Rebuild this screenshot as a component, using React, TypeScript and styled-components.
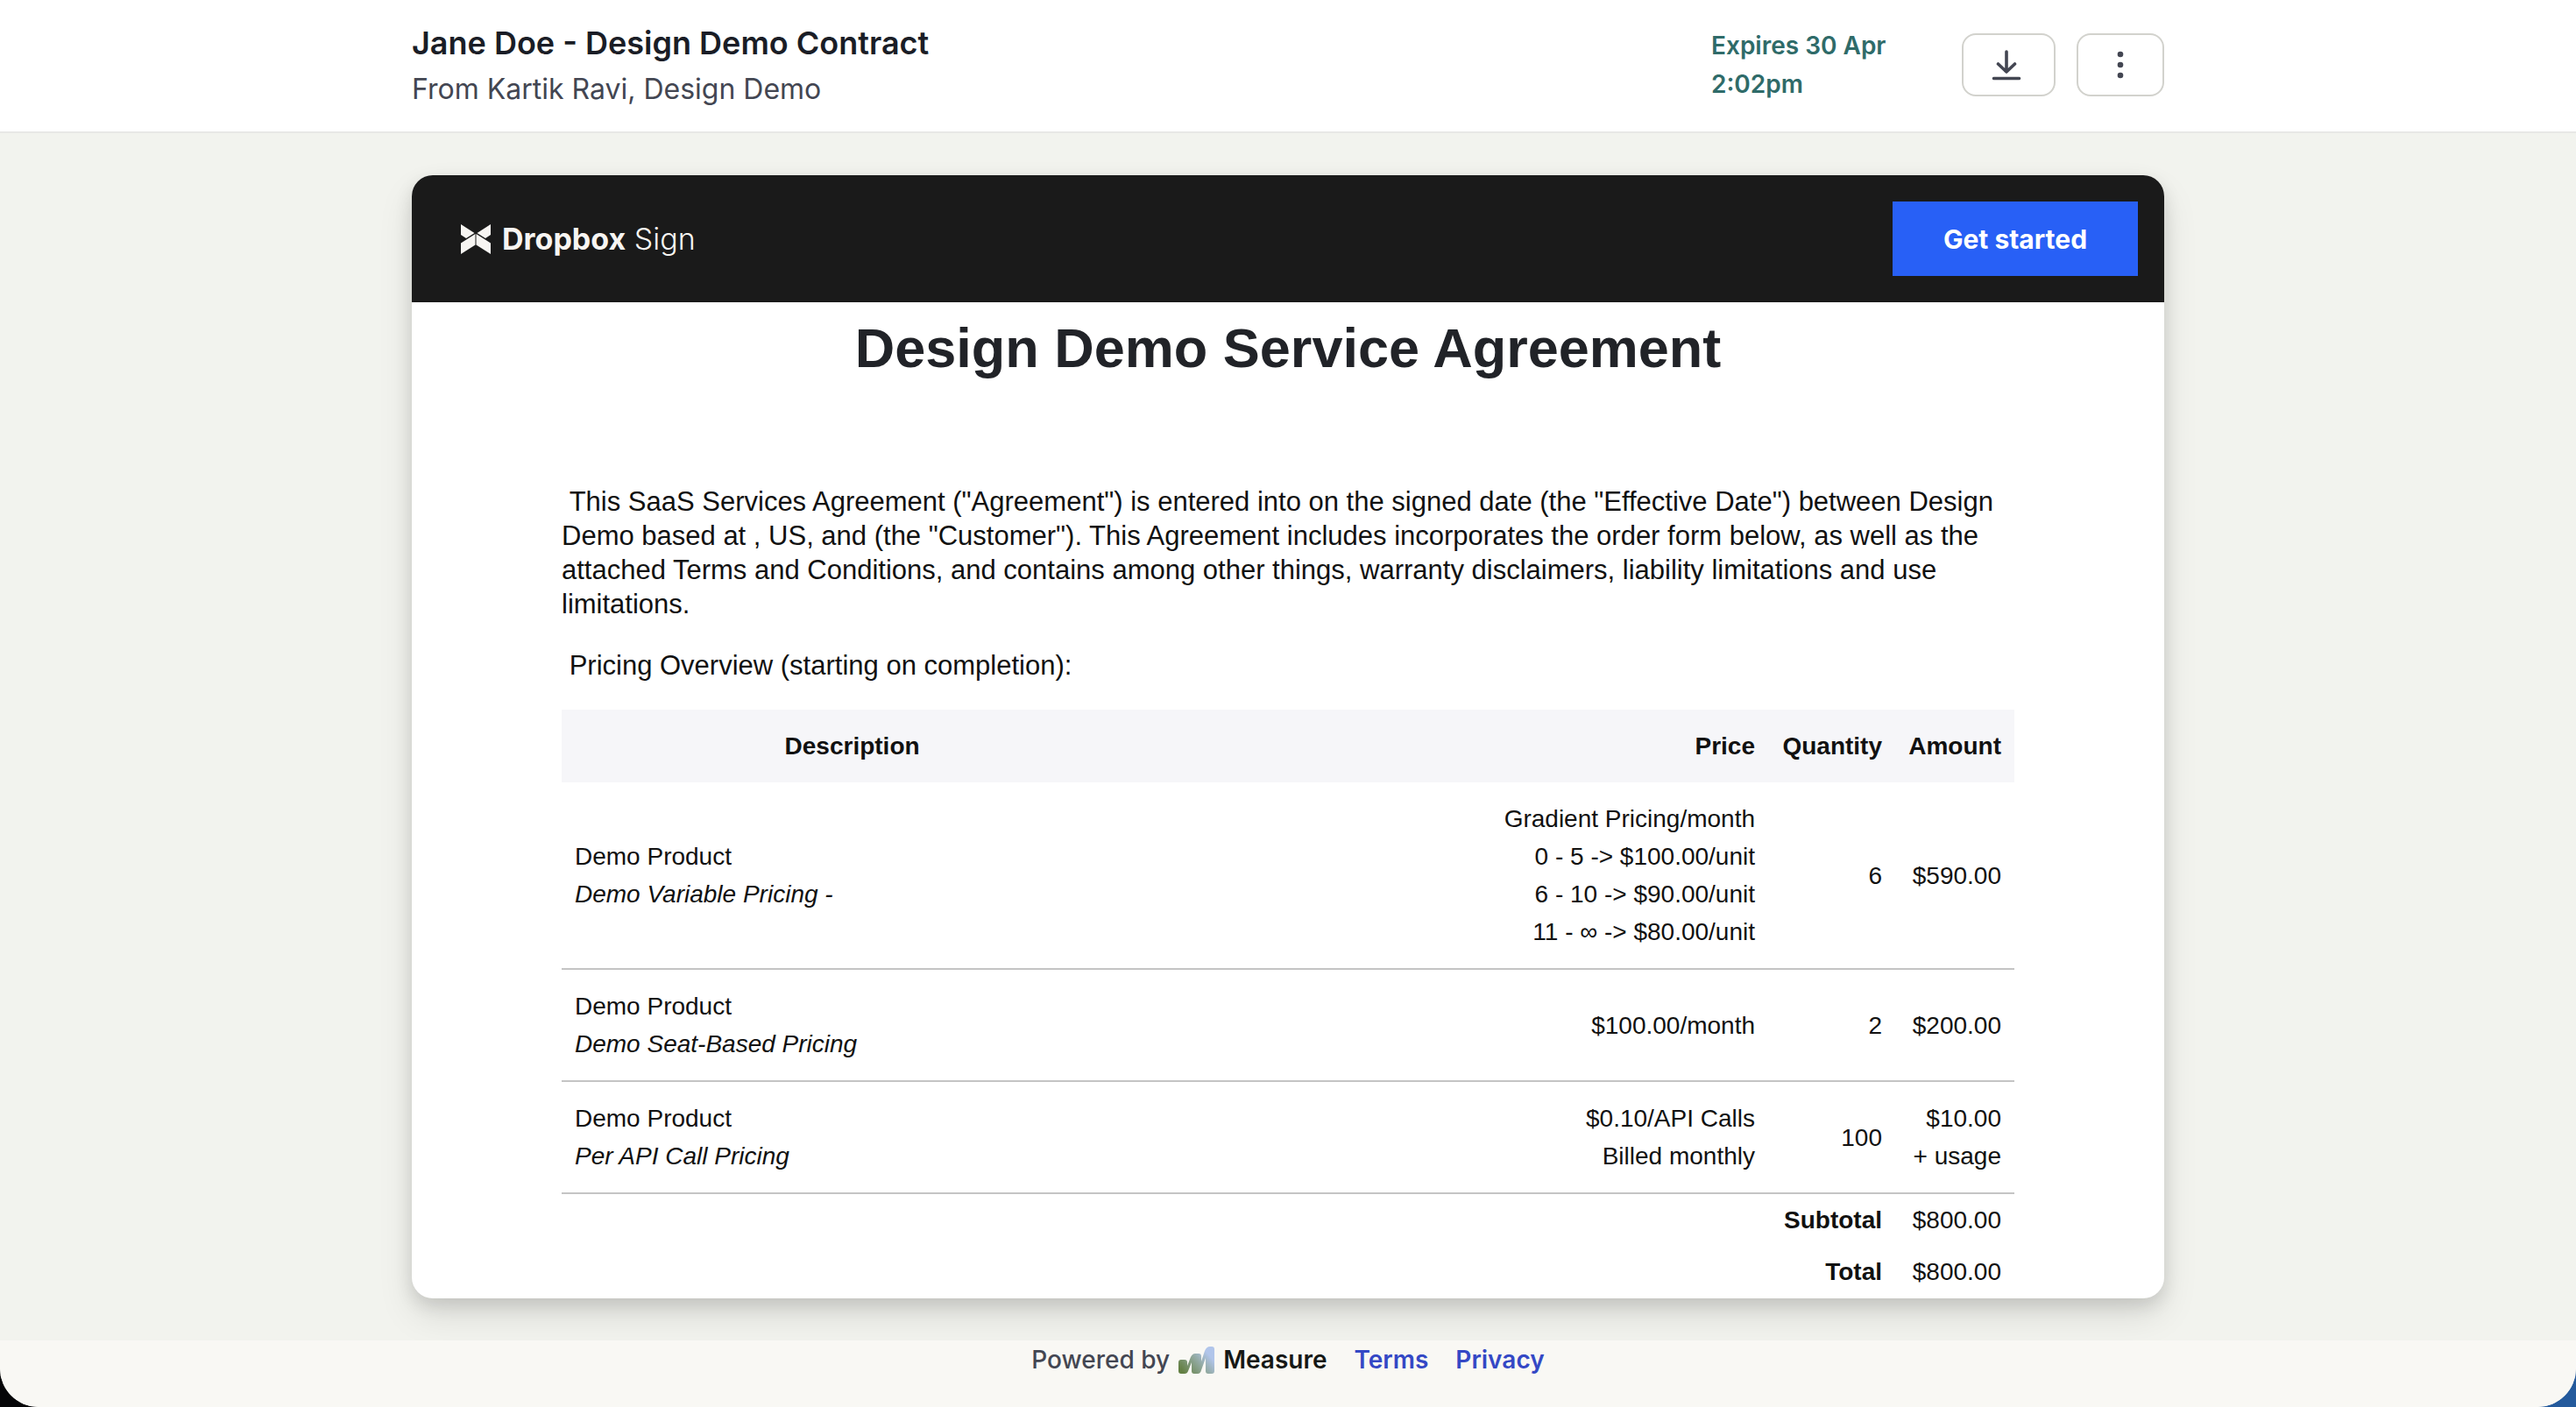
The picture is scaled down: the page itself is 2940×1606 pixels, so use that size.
import React from "react";
import styled, { createGlobalStyle } from "styled-components";

interface LineItem {
  id: string;
  product: string;
  plan: string;
  price: string[];
  quantity: string;
  amount: string[];
}

const lineItems: LineItem[] = [
  {
    id: "variable",
    product: "Demo Product",
    plan: "Demo Variable Pricing -",
    price: [
      "Gradient Pricing/month",
      "0 - 5 -> $100.00/unit",
      "6 - 10 -> $90.00/unit",
      "11 - ∞ -> $80.00/unit",
    ],
    quantity: "6",
    amount: ["$590.00"],
  },
  {
    id: "seat",
    product: "Demo Product",
    plan: "Demo Seat-Based Pricing",
    price: ["$100.00/month"],
    quantity: "2",
    amount: ["$200.00"],
  },
  {
    id: "api",
    product: "Demo Product",
    plan: "Per API Call Pricing",
    price: ["$0.10/API Calls", "Billed monthly"],
    quantity: "100",
    amount: ["$10.00", "+ usage"],
  },
];

const totals = [
  { label: "Subtotal", value: "$800.00" },
  { label: "Total", value: "$800.00" },
];

const GlobalStyle = createGlobalStyle`
  * {
    box-sizing: border-box;
  }

  body {
    margin: 0;
    background: linear-gradient(90deg, #050507 50%, #245a9c 50%);
    font-family: Inter, "Liberation Sans", sans-serif;
  }
`;

const Page = styled.div`
  display: flex;
  flex-direction: column;
  min-height: 100vh;
  overflow: hidden;
  background: #f2f3ee;
  border-radius: 0 0 44px 44px;
`;

const Header = styled.header`
  padding: 0 40px 2px;
  background: #ffffff;
  border-bottom: 2px solid #e8e8e6;
`;

const HeaderInner = styled.div`
  display: flex;
  align-items: center;
  justify-content: space-between;
  max-width: 2000px;
  min-height: 148px;
  margin: 0 auto;
`;

const Heading = styled.div`
  display: flex;
  flex-direction: column;
  gap: 2px;
  padding-top: 2px;
`;

const Title = styled.h1`
  margin: 0;
  font-size: 36px;
  font-weight: 600;
  line-height: 52px;
  color: #1a1d26;
`;

const Subtitle = styled.p`
  margin: 0;
  font-size: 32px;
  line-height: 50px;
  color: #434652;
`;

const Actions = styled.div`
  display: flex;
  align-items: center;
  gap: 24px;
`;

const Expiry = styled.p`
  width: 262px;
  margin: 0;
  padding-right: 40px;
  font-size: 28px;
  font-weight: 600;
  line-height: 44px;
  color: #2f6b69;
`;

const IconButton = styled.button`
  display: flex;
  align-items: center;
  justify-content: center;
  width: 100px;
  height: 72px;
  padding: 0;
  background: #ffffff;
  border: 2px solid #d2d2cd;
  border-radius: 16px;
  color: #434652;
  cursor: pointer;
`;

const DownloadButton = styled(IconButton)`
  width: 107px;
  padding-right: 6px;
`;

const Main = styled.main`
  flex: 1;
  padding: 48px 40px;
`;

const Card = styled.section`
  max-width: 2000px;
  margin: 0 auto;
  overflow: hidden;
  background: #ffffff;
  border-radius: 24px;
  box-shadow:
    0 20px 40px rgba(0, 0, 0, 0.1),
    0 8px 20px rgba(0, 0, 0, 0.12);
`;

const Banner = styled.div`
  display: flex;
  align-items: center;
  justify-content: space-between;
  padding: 30px 30px 30px 56px;
  background: #1a1a1a;
`;

const Brand = styled.div`
  display: flex;
  align-items: center;
  gap: 13px;
  font-size: 34px;
  line-height: 40px;
  color: #f7f5f2;
`;

const BrandName = styled.span`
  font-weight: 300;

  strong {
    font-weight: 700;
  }
`;

const StartButton = styled.button`
  width: 280px;
  height: 85px;
  background: #2860f6;
  border: none;
  font-family: inherit;
  font-size: 30px;
  font-weight: 700;
  color: #ffffff;
  cursor: pointer;
`;

const Document = styled.article`
  padding: 16px 171px 1px;
  font-family: "Liberation Sans", Arial, sans-serif;
  color: #111111;
`;

const DocumentTitle = styled.h2`
  margin: 0 0 120px;
  font-size: 63px;
  line-height: 72px;
  text-align: center;
  color: #212328;
`;

const Paragraph = styled.p`
  margin: 0 0 31px;
  font-size: 31px;
  line-height: 39px;
  white-space: pre-wrap;
`;

const PricingTable = styled.table`
  width: 100%;
  border-collapse: collapse;
  table-layout: fixed;
  font-size: 28px;
  line-height: 43px;
`;

const Column = styled.col<{ $width?: string }>`
  width: ${({ $width }) => $width ?? "auto"};
`;

const HeadCell = styled.th<{ $align: string }>`
  padding: 20px 15px;
  background: #f6f6f9;
  text-align: ${({ $align }) => $align};
`;

const ItemRow = styled.tr`
  border-bottom: 2px solid #c4c4c4;
`;

const Cell = styled.td<{ $align: string }>`
  padding: 20px 15px;
  text-align: ${({ $align }) => $align};
  vertical-align: middle;
`;

const TotalLabel = styled.th`
  padding: 8px 15px;
  text-align: right;
`;

const TotalValue = styled.td`
  padding: 8px 15px;
  text-align: right;
`;

const Footer = styled.footer`
  display: flex;
  align-items: flex-start;
  justify-content: center;
  gap: 31px;
  min-height: 76px;
  padding-top: 2px;
  background: #f9f8f4;
  font-size: 28px;
  font-weight: 500;
  line-height: 40px;
  color: #434652;
`;

const PoweredBy = styled.div`
  display: flex;
  align-items: center;
  gap: 10px;
`;

const MeasureName = styled.span`
  font-weight: 600;
  color: #161816;
`;

const FooterLink = styled.a`
  font-weight: 600;
  color: #3448c5;
  text-decoration: none;
`;

const DownloadIcon = () => (
  <svg
    width="34"
    height="36"
    viewBox="0 0 34 36"
    fill="none"
    stroke="currentColor"
    strokeWidth="3.6"
    strokeLinecap="round"
    strokeLinejoin="round"
    aria-hidden="true"
  >
    <path d="M17 3v23M7.500 17l9.500 9 9.500-9M2.500 33.500h29" />
  </svg>
);

const MoreIcon = () => (
  <svg
    width="8"
    height="32"
    viewBox="0 0 8 32"
    fill="currentColor"
    aria-hidden="true"
  >
    <circle cx="4" cy="4" r="3.3" />
    <circle cx="4" cy="16" r="3.3" />
    <circle cx="4" cy="28" r="3.3" />
  </svg>
);

const SignMark = () => (
  <svg
    width="34"
    height="34"
    viewBox="0 0 34 34"
    fill="currentColor"
    aria-hidden="true"
  >
    <path d="M0 0l15.500 10L6 16l-6-4z" />
    <path d="M34 0L18.500 10 28 16l6-4z" />
    <path d="M0 21.500l16.500-10.500v12.500L0 34z" />
    <path d="M34 21.500L17.500 11v12.500L34 34z" />
  </svg>
);

const MeasureMark = () => (
  <svg width="41" height="31" viewBox="0 0 41 31" aria-hidden="true">
    <defs>
      <linearGradient
        id="measure"
        x1="0"
        y1="31"
        x2="36"
        y2="0"
        gradientUnits="userSpaceOnUse"
      >
        <stop offset="0.1" stopColor="#637f42" />
        <stop offset="0.5" stopColor="#8da596" />
        <stop offset="0.85" stopColor="#b1c5ea" />
      </linearGradient>
    </defs>
    <path
      fill="url(#measure)"
      d="M0 18q0-3 3-3h4q3 0 3 3v4l4-10q2-4 5-4h4q3 0 3 3v6l4-12q2-5 6-5h2q3 0 3 3v25q0 3-3 3h-4q-3 0-3-3V13l-5 14q-1 4-4 4h-4q-3 0-3-3V18l-4 10q-1 3-4 3H3q-3 0-3-3z"
    />
  </svg>
);

const renderLines = (lines: string[]) =>
  lines.map((line) => <div key={line}>{line}</div>);

const App = () => {
  return (
    <>
      <GlobalStyle />
      <Page>
        <Header>
          <HeaderInner>
            <Heading>
              <Title>Jane Doe - Design Demo Contract</Title>
              <Subtitle>From Kartik Ravi, Design Demo</Subtitle>
            </Heading>
            <Actions>
              <Expiry>Expires 30 Apr 2:02pm</Expiry>
              <DownloadButton type="button" aria-label="Download">
                <DownloadIcon />
              </DownloadButton>
              <IconButton type="button" aria-label="More options">
                <MoreIcon />
              </IconButton>
            </Actions>
          </HeaderInner>
        </Header>

        <Main>
          <Card>
            <Banner>
              <Brand>
                <SignMark />
                <BrandName>
                  <strong>Dropbox</strong> Sign
                </BrandName>
              </Brand>
              <StartButton type="button">Get started</StartButton>
            </Banner>

            <Document>
              <DocumentTitle>Design Demo Service Agreement</DocumentTitle>
              <Paragraph>
                {' This SaaS Services Agreement ("Agreement") is entered into on the signed date (the "Effective Date") between Design Demo based at , US, and (the "Customer"). This Agreement includes incorporates the order form below, as well as the attached Terms and Conditions, and contains among other things, warranty disclaimers, liability limitations and use limitations.'}
              </Paragraph>
              <Paragraph>{" Pricing Overview (starting on completion):"}</Paragraph>

              <PricingTable>
                <colgroup>
                  <Column $width="40%" />
                  <Column />
                  <Column $width="145px" />
                  <Column $width="136px" />
                </colgroup>
                <thead>
                  <tr>
                    <HeadCell $align="center">Description</HeadCell>
                    <HeadCell $align="right">Price</HeadCell>
                    <HeadCell $align="right">Quantity</HeadCell>
                    <HeadCell $align="right">Amount</HeadCell>
                  </tr>
                </thead>
                <tbody>
                  {lineItems.map((item) => (
                    <ItemRow key={item.id}>
                      <Cell $align="left">
                        <div>{item.product}</div>
                        <em>{item.plan}</em>
                      </Cell>
                      <Cell $align="right">{renderLines(item.price)}</Cell>
                      <Cell $align="right">{item.quantity}</Cell>
                      <Cell $align="right">{renderLines(item.amount)}</Cell>
                    </ItemRow>
                  ))}
                </tbody>
                <tfoot>
                  {totals.map((total) => (
                    <tr key={total.label}>
                      <TotalLabel colSpan={3} scope="row">
                        {total.label}
                      </TotalLabel>
                      <TotalValue>{total.value}</TotalValue>
                    </tr>
                  ))}
                </tfoot>
              </PricingTable>
            </Document>
          </Card>
        </Main>

        <Footer>
          <PoweredBy>
            Powered by
            <MeasureMark />
            <MeasureName>Measure</MeasureName>
          </PoweredBy>
          <FooterLink href="#terms">Terms</FooterLink>
          <FooterLink href="#privacy">Privacy</FooterLink>
        </Footer>
      </Page>
    </>
  );
};

export default App;
